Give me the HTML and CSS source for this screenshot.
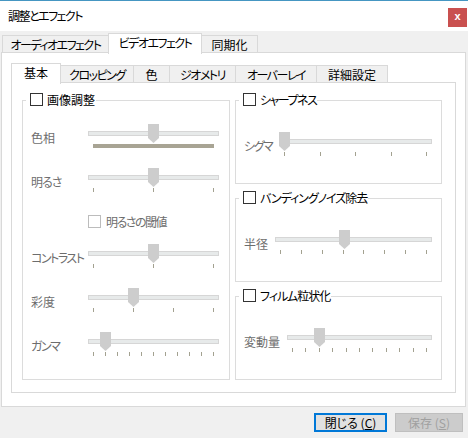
FILE: index.html
```html
<!DOCTYPE html>
<html lang="ja">
<head>
<meta charset="utf-8">
<title>調整とエフェクト</title>
<link rel="stylesheet" href="styles.css">
</head>
<body>
<div class="window">
  <div class="titlebar">
    <span class="title kana">調整とエフェクト</span>
    <span class="close">x</span>
  </div>

  <div class="tabbar outer-tabs">
    <div class="tab tab-audio kana">オーディオエフェクト</div>
    <div class="tab tab-video kana active">ビデオエフェクト</div>
    <div class="tab tab-sync">同期化</div>
  </div>

  <div class="outer-pane">
    <div class="tabbar inner-tabs">
      <div class="tab tab-basic active">基本</div>
      <div class="tab tab-crop kana">クロッピング</div>
      <div class="tab tab-color">色</div>
      <div class="tab tab-geom kana">ジオメトリ</div>
      <div class="tab tab-overlay kana">オーバーレイ</div>
      <div class="tab tab-adv">詳細設定</div>
    </div>

    <div class="inner-pane">
      <div class="group group-main">
        <div class="group-head"><span class="cb"></span><span>画像調整</span></div>

        <div class="srow">
          <span class="slabel">色相</span>
          <div class="slider">
            <div class="track"></div>
            <svg class="thumb" style="left: calc((100% - 11px) * 0.5)" width="11" height="19" viewBox="0 0 11 19"><path d="M0 0H11V14L5.5 19L0 14Z"/></svg>
            <div class="huebar"></div>
          </div>
        </div>

        <div class="srow">
          <span class="slabel kana-m">明るさ</span>
          <div class="slider">
            <div class="track"></div>
            <svg class="thumb" style="left: calc((100% - 11px) * 0.5)" width="11" height="19" viewBox="0 0 11 19"><path d="M0 0H11V14L5.5 19L0 14Z"/></svg>
            <div class="ticks"><i></i><i></i><i></i></div>
          </div>
        </div>

        <div class="check-row">
          <span class="cb cb-disabled"></span><span class="dim kana">明るさの閾値</span>
        </div>

        <div class="srow">
          <span class="slabel kana">コントラスト</span>
          <div class="slider">
            <div class="track"></div>
            <svg class="thumb" style="left: calc((100% - 11px) * 0.5)" width="11" height="19" viewBox="0 0 11 19"><path d="M0 0H11V14L5.5 19L0 14Z"/></svg>
            <div class="ticks"><i></i><i></i><i></i></div>
          </div>
        </div>

        <div class="srow">
          <span class="slabel">彩度</span>
          <div class="slider">
            <div class="track"></div>
            <svg class="thumb" style="left: calc((100% - 11px) * 0.3333)" width="11" height="19" viewBox="0 0 11 19"><path d="M0 0H11V14L5.5 19L0 14Z"/></svg>
            <div class="ticks"><i></i><i></i><i></i><i></i></div>
          </div>
        </div>

        <div class="srow">
          <span class="slabel kana">ガンマ</span>
          <div class="slider">
            <div class="track"></div>
            <svg class="thumb" style="left: calc((100% - 11px) * 0.1)" width="11" height="19" viewBox="0 0 11 19"><path d="M0 0H11V14L5.5 19L0 14Z"/></svg>
            <div class="ticks"><i></i><i></i><i></i><i></i><i></i><i></i><i></i><i></i><i></i><i></i><i></i></div>
          </div>
        </div>
      </div>

      <div class="col-right">
        <div class="group group-side">
          <div class="group-head"><span class="cb"></span><span class="kana">シャープネス</span></div>
          <div class="srow srow-side">
            <span class="slabel-side kana">シグマ</span>
            <div class="slider">
              <div class="track"></div>
              <svg class="thumb" style="left: calc((100% - 11px) * 0)" width="11" height="19" viewBox="0 0 11 19"><path d="M0 0H11V14L5.5 19L0 14Z"/></svg>
              <div class="ticks"><i></i><i></i><i></i><i></i><i></i></div>
            </div>
          </div>
        </div>

        <div class="group group-side">
          <div class="group-head"><span class="cb"></span><span class="kana-m">バンディングノイズ除去</span></div>
          <div class="srow srow-side">
            <span class="slabel-side">半径</span>
            <div class="slider">
              <div class="track"></div>
              <svg class="thumb" style="left: calc((100% - 11px) * 0.437)" width="11" height="19" viewBox="0 0 11 19"><path d="M0 0H11V14L5.5 19L0 14Z"/></svg>
              <div class="ticks"><i></i><i></i><i></i><i></i><i></i><i></i><i></i><i></i></div>
            </div>
          </div>
        </div>

        <div class="group group-side">
          <div class="group-head"><span class="cb"></span><span class="kana-m">フィルム粒状化</span></div>
          <div class="srow srow-side">
            <span class="slabel-side">変動量</span>
            <div class="slider">
              <div class="track"></div>
              <svg class="thumb" style="left: calc((100% - 11px) * 0.2)" width="11" height="19" viewBox="0 0 11 19"><path d="M0 0H11V14L5.5 19L0 14Z"/></svg>
              <div class="ticks"><i></i><i></i><i></i><i></i><i></i><i></i><i></i><i></i><i></i><i></i><i></i></div>
            </div>
          </div>
        </div>
      </div>
    </div>
  </div>

  <div class="buttons">
    <button class="btn btn-close">閉じる (<u>C</u>)</button>
    <button class="btn btn-save" disabled>保存 (<u>S</u>)</button>
  </div>
</div>
</body>
</html>
```

FILE: styles.css
```css
* { box-sizing: border-box; }

html, body {
  margin: 0;
  padding: 0;
}

body {
  width: 468px;
  height: 438px;
  overflow: hidden;
  background: #f0f0f0;
  font-family: "Noto Sans CJK JP", "Noto Sans", sans-serif;
  font-size: 12px;
  font-feature-settings: "palt";
  color: #000;
}

/* katakana-heavy text is set tighter, like the UI font of the original */
.kana { letter-spacing: -1.5px; }
.kana-m { letter-spacing: -1px; }

.window {
  width: 468px;
  height: 438px;
  display: flex;
  flex-direction: column;
  border-top: 1px solid #4596c2;
  background: #f0f0f0;
}

/* title bar */
.titlebar {
  height: 30px;
  flex: none;
  background: #fff;
  display: flex;
  justify-content: space-between;
  align-items: center;
  padding: 0 1px 0 8px;
}

.title {
  line-height: 16px;
}

.close {
  align-self: flex-start;
  margin-top: 7px;
  width: 19px;
  height: 19px;
  background: #c9504f;
  color: #fff;
  font-family: "Liberation Sans", Arial, sans-serif;
  font-weight: bold;
  font-size: 11px;
  line-height: 17px;
  text-align: center;
}

/* tabs */
.tabbar {
  display: flex;
  align-items: flex-end;
  margin-bottom: -1px;
  flex: none;
}

.outer-tabs {
  height: 22px;
  padding-left: 2px;
}

.inner-tabs {
  height: 20px;
}

.tab {
  height: 18px;
  padding: 0;
  border: 1px solid #d9d9d9;
  border-bottom: 0;
  background: #f0f0f0;
  display: flex;
  align-items: center;
  justify-content: center;
  line-height: 16px;
  white-space: nowrap;
}

.tab + .tab {
  margin-left: -1px;
}

.tab.active {
  height: 21px;
  margin-bottom: -1px;
  background: #fff;
  position: relative;
  z-index: 1;
  padding-bottom: 2px;
}

.tab-audio { width: 107px; }
.tab-video { width: 94px; }
.tab-sync { width: 57px; }

.tab-basic { width: 50px; }
.tab-crop { width: 74px; }
.tab-color { width: 37px; }
.tab-geom { width: 67px; }
.tab-overlay { width: 82px; }
.tab-adv { width: 72px; }

/* panes */
.outer-pane {
  margin-left: 1px;
  width: 465px;
  flex: none;
  background: #fff;
  border: 1px solid #d9d9d9;
  padding: 10px 9px 13px 9px;
  display: flex;
  flex-direction: column;
}

.inner-pane {
  border: 1px solid #d9d9d9;
  background: #fff;
  padding: 10px 13px 12px 10px;
  display: grid;
  grid-template-columns: 208px 207px;
  column-gap: 5px;
}

/* group boxes */
.group {
  margin-top: 7px;
  border: 1px solid #dcdcdc;
  display: flex;
  flex-direction: column;
}

.group-main {
  padding: 0 10px 21px 8px;
}

.group-side {
  flex: 1;
  padding: 0 9px 0 8px;
}

.col-right {
  display: flex;
  flex-direction: column;
  row-gap: 7px;
}

.group-head {
  align-self: flex-start;
  margin: -8px 0 0 -5px;
  height: 13px;
  padding: 0 1px 0 4px;
  background: #fff;
  display: flex;
  align-items: center;
  column-gap: 4px;
  line-height: 13px;
  white-space: nowrap;
}

.cb {
  width: 13px;
  height: 13px;
  flex: none;
  border: 1px solid #333;
  background: #fff;
}

.cb-disabled {
  border-color: #bcbcbc;
}

.dim {
  color: #6d6d6d;
}

/* slider rows */
.srow {
  display: flex;
  align-items: center;
  margin-top: 18px;
}

.group-main .srow:first-of-type {
  margin-top: 20px;
}

.srow-side {
  margin-top: 26px;
  column-gap: 7px;
}

.slabel {
  width: 57px;
  flex: none;
  color: #6d6d6d;
  line-height: 14px;
  padding-top: 2px;
  white-space: nowrap;
}

.slabel-side {
  flex: none;
  color: #6d6d6d;
  line-height: 14px;
  padding-top: 2px;
  white-space: nowrap;
}

.check-row {
  display: flex;
  align-items: center;
  column-gap: 5px;
  margin: 21px 0 -2px 57px;
  height: 13px;
  line-height: 13px;
}

.slider {
  position: relative;
  flex: 1;
  height: 26px;
}

.track {
  margin-top: 7px;
  height: 5px;
  border: 1px solid #d6d6d6;
  background: #e7eaea;
}

.thumb {
  position: absolute;
  top: 0;
  display: block;
  fill: #cdcdcd;
}

.ticks {
  display: flex;
  justify-content: space-between;
  padding: 0 5px;
  margin-top: 8px;
  height: 4px;
}

.ticks i {
  display: block;
  width: 1px;
  height: 4px;
  background: #a3a190;
}

.huebar {
  margin: 8px 5px 0 5px;
  height: 4px;
  background: #a8a494;
}

/* buttons */
.buttons {
  display: flex;
  justify-content: flex-end;
  column-gap: 8px;
  padding: 6px 5px 0 0;
}

.btn {
  height: 19px;
  padding: 0;
  font: inherit;
  font-feature-settings: "palt";
  line-height: 15px;
  background: #e1e1e1;
  color: #000;
  border: 1px solid #adadad;
}

.btn-close {
  width: 73px;
  border: 2px solid #0078d7;
}

.btn-save {
  width: 68px;
  background: #cccccc;
  border-color: #bfbfbf;
  color: #a0a0a0;
}
```
